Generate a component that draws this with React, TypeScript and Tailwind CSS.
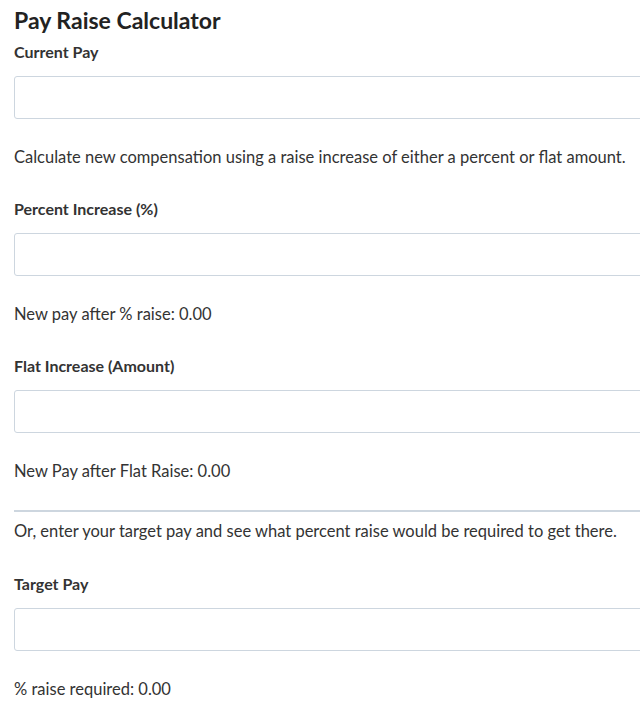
import React from "react";

function Field({ label, className = "" }: { label: string; className?: string }) {
  return (
    <div className={className}>
      <label className="block text-[16px] leading-[22px] font-bold text-[#333333]">{label}</label>
      <input
        type="text"
        className="mt-[13px] block h-[43px] w-[680px] rounded-[3px] border border-[#cdd6df] bg-white px-3 outline-none"
      />
    </div>
  );
}

export default function App() {
  return (
    <div className="min-h-[717px] w-full overflow-hidden bg-white px-[14px] font-['Lato',sans-serif] text-[#333333]">
      <h1 className="pt-[5px] text-[23px] leading-[30px] font-bold text-[#222222]">Pay Raise Calculator</h1>
      <Field label="Current Pay" className="mt-[6px]" />
      <p className="mt-[26px] text-[16.5px] leading-[24px]">
        Calculate new compensation using a raise increase of either a percent or flat amount.
      </p>
      <Field label="Percent Increase (%)" className="mt-[29px]" />
      <p className="mt-[26px] text-[16.5px] leading-[24px]">New pay after % raise: 0.00</p>
      <Field label="Flat Increase (Amount)" className="mt-[29px]" />
      <p className="mt-[26px] text-[16.5px] leading-[24px]">New Pay after Flat Raise: 0.00</p>
      <hr className="mt-[27px] mr-[-14px] border-0 h-[2px] bg-[#cdd6df]" />
      <p className="mt-[7px] text-[16.5px] leading-[24px]">
        Or, enter your target pay and see what percent raise would be required to get there.
      </p>
      <Field label="Target Pay" className="mt-[30px]" />
      <p className="mt-[26px] text-[16.5px] leading-[24px]">% raise required: 0.00</p>
    </div>
  );
}
